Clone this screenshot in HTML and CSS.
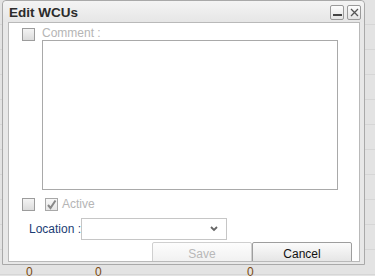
FILE: index.html
```html
<!DOCTYPE html>
<html>
<head>
<meta charset="utf-8">
<link rel="stylesheet" href="styles.css">
</head>
<body>
<div class="page">
  <div class="dialog">
    <div class="titlebar">
      <span class="title">Edit WCUs</span>
      <div class="tbtns">
        <span class="tbtn"><svg width="9" height="9" viewBox="0 0 9 9"><rect x="0" y="6" width="9" height="2" fill="#444"/></svg></span>
        <span class="tbtn"><svg width="9" height="9" viewBox="0 0 9 9"><path d="M1 1L8 8M8 1L1 8" stroke="#555" stroke-width="1.3"/></svg></span>
      </div>
    </div>
    <div class="content">
      <div class="row1">
        <span class="cb"></span>
        <div class="commentcol">
          <div class="lbl-dis">Comment :</div>
          <div class="textarea"></div>
        </div>
      </div>
      <div class="row2">
        <span class="cb"></span>
        <span class="cb cb-checked"><svg width="11" height="11" viewBox="0 0 11 11"><path d="M2 6L4.5 9L9.5 1.5" stroke="#888" stroke-width="2" fill="none"/></svg></span>
        <span class="lbl-dis">Active</span>
      </div>
      <div class="row3">
        <span class="loc">Location :</span>
        <div class="select"><svg width="8" height="6" viewBox="0 0 8 6"><path d="M1 1L4 4L7 1" stroke="#666" stroke-width="1.8" fill="none"/></svg></div>
      </div>
      <div class="buttons">
        <div class="btn btn-dis">Save</div>
        <div class="btn">Cancel</div>
      </div>
    </div>
  </div>
  <div class="bottomrow">
    <span class="z z1">0</span><span class="z z2">0</span><span class="z z3">0</span>
  </div>
</div>
</body>
</html>
```
FILE: styles.css
```css
html, body { margin: 0; padding: 0; }
body {
  width: 375px; height: 276px; overflow: hidden;
  background: #e3e3e3;
  font-family: "Liberation Sans", Arial, sans-serif;
}
.page { position: relative; height: 276px; background: repeating-linear-gradient(#e3e3e3 0, #e3e3e3 24px, #d6d6d6 24px, #d6d6d6 25px); }
.dialog {
  margin-left: 2px;
  width: 363px;
  height: 265px;
  border: 1px solid #a9a9a9;
  border-radius: 4px 4px 0 0;
  background: #e8e8e8;
  box-sizing: border-box;
  padding: 0 4px 2px 5px;
  display: flex; flex-direction: column;
}
.titlebar {
  height: 21px;
  flex: none;
  display: flex; align-items: center; justify-content: space-between;
  background: linear-gradient(#f4f4f4, #e6e6e6);
  margin: 0 -4px 0 -5px;
  padding: 0 3px 0 6px;
  border-radius: 4px 4px 0 0;
}
.title { font-weight: bold; font-size: 13.5px; color: #2b2b2b; margin-top: 1px; }
.tbtns { display: flex; gap: 3px; margin-top: 2px; }
.tbtn {
  width: 12px; height: 13px; border: 1px solid #9a9a9a; border-radius: 2px;
  background: linear-gradient(#fdfdfd, #e4e4e4);
  display: flex; align-items: center; justify-content: center;
}
.content {
  flex: 1;
  min-height: 0;
  background: #fff;
  border: 1px solid #b9b9b9;
  box-sizing: border-box;
  overflow: hidden;
  padding-top: 4px;
}
.row1 { display: flex; padding-left: 13px; }
.cb {
  width: 11px; height: 11px; border: 1px solid #9c9c9c;
  background: linear-gradient(#f4f4f4, #dcdcdc);
  display: inline-flex; align-items: center; justify-content: center;
  flex: none;
}
.row1 .cb { margin-top: 1px; }
.commentcol { margin-left: 7px; }
.lbl-dis { color: #b5b5b5; font-size: 12px; line-height: 13px; }
.textarea {
  width: 296px; height: 150px; box-sizing: border-box;
  border: 1px solid #a9a9a9;
}
.row2 { display: flex; align-items: center; padding-left: 13px; margin-top: 7px; height: 14px; }
.cb-checked { margin-left: 10px; background: linear-gradient(#f8f8f8, #e6e6e6); border-color: #a8a8a8; }
.row2 .lbl-dis { margin-left: 4px; }
.row3 { display: flex; align-items: center; margin-top: 7px; padding-left: 20px; height: 22px; }
.loc { color: #1b3d74; font-size: 12px; width: 52px; white-space: nowrap; flex: none; }
.select {
  width: 146px; height: 22px; box-sizing: border-box; flex: none;
  border: 1px solid #c6c6c6;
  display: flex; align-items: center; justify-content: flex-end; padding-right: 8px;
}
.buttons { display: flex; padding-left: 143px; margin-top: 2px; }
.btn {
  width: 100px; height: 23px; box-sizing: border-box;
  border: 1px solid #9e9e9e; border-radius: 2px;
  background: linear-gradient(#fbfbfb, #e2e2e2);
  font-size: 12px; color: #111;
  display: flex; align-items: center; justify-content: center;
}
.btn-dis { color: #b8b8b8; border-color: #cfcfcf; background: linear-gradient(#fdfdfd, #efefef); }
.bottomrow { position: relative; height: 11px; }
.z { position: absolute; top: 1px; font-size: 12px; line-height: 12px; color: #7a4a10; }
.z1 { left: 26px; } .z2 { left: 95px; } .z3 { left: 247px; }
```
